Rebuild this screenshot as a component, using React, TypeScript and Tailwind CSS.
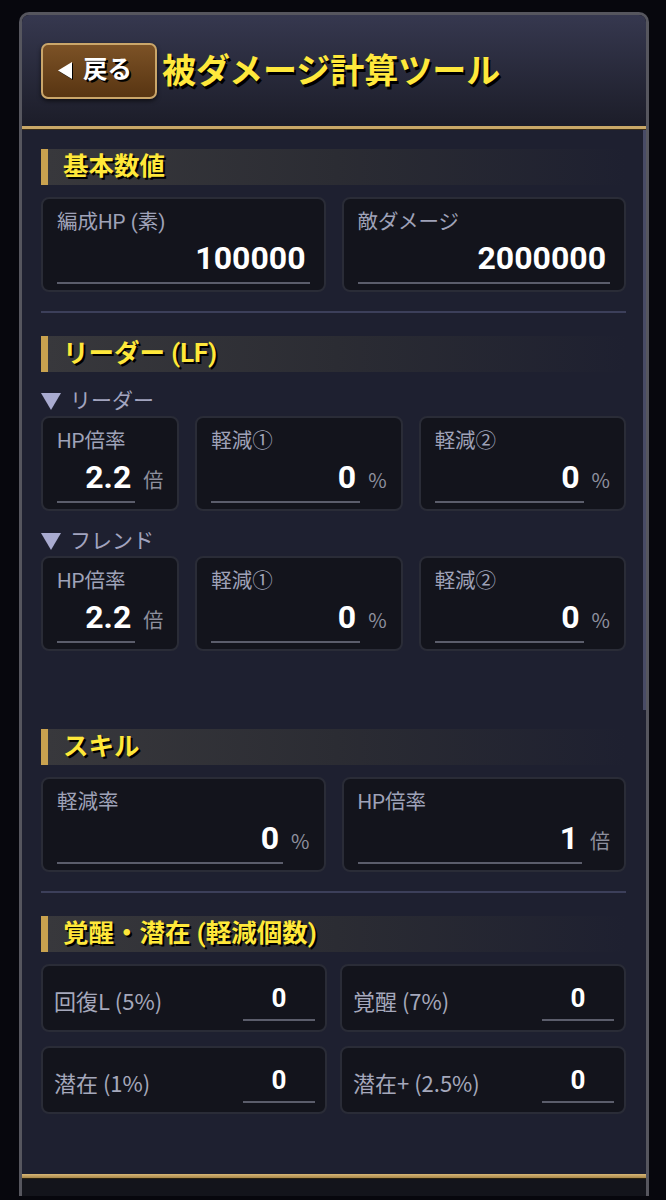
import type { ReactNode } from 'react'

// ── 小さな部品 ────────────────────────────────────────────────────────────────
function SectionTitle({ children }: { children: ReactNode }) {
  return (
    <div className="h-[36px] flex items-center border-l-[7px] border-[#c9a24f] bg-gradient-to-r from-[#38383c] via-[#2b2c33] to-transparent pl-[15px]">
      <span className="text-[25.5px] font-bold leading-none text-[#ffe83a] [text-shadow:2px_2px_0_#000]">
        {children}
      </span>
    </div>
  )
}

function SubLabel({ children }: { children: ReactNode }) {
  return (
    <div className="h-[28px] flex items-center">
      <svg width="20" height="17" viewBox="0 0 20 17" className="shrink-0">
        <polygon points="0,0 20,0 10,17" fill="#a9abd0" />
      </svg>
      <span className="ml-[9px] text-[21px] leading-none text-[#a2a4bf]">{children}</span>
    </div>
  )
}

interface FieldProps {
  label: string
  value: string
  unit?: string
}

function Field({ label, value, unit }: FieldProps) {
  return (
    <div className="h-[95px] rounded-[8px] border-2 border-[#2a2c37] bg-[#13141c] pl-[14px] pr-[14px] pt-[9px]">
      <div className="h-[28px] text-[20.5px] leading-[28px] text-[#9fa2b8] whitespace-nowrap">{label}</div>
      <div className="flex items-baseline">
        <div className="flex-1 h-[48px] flex items-end justify-end border-b-2 border-[#5b5d6b] pb-[4px] pr-[4px]">
          <span className="text-[32px] leading-[40px] font-bold text-white">{value}</span>
        </div>
        {unit && (
          <span className="ml-[8px] text-[20px] font-['Noto_Sans_CJK_JP'] text-[#8e909e]">{unit}</span>
        )}
      </div>
    </div>
  )
}

function CountField({ label, value }: { label: string; value: string }) {
  return (
    <div className="h-[68px] rounded-[8px] border-2 border-[#2a2c37] bg-[#13141c] pl-[11px] pr-[10px] flex items-center justify-between">
      <span className="pt-[4px] text-[22px] font-['Noto_Sans_CJK_JP'] text-[#a5a8bb] whitespace-nowrap">{label}</span>
      <div className="self-stretch flex flex-col justify-end pb-[9px]">
        <div className="w-[72px] border-b-2 border-[#5b5d6b] pb-[5px] text-center text-[26px] leading-[32px] font-bold text-white">
          {value}
        </div>
      </div>
    </div>
  )
}

function Divider() {
  return <div className="h-[2px] bg-[#3c3f5a]" />
}

// ── ページ ───────────────────────────────────────────────────────────────────
export default function App() {
  return (
    <div className="w-[666px] h-[1200px] bg-[#07070d] pt-[12px] font-[Roboto,'Noto_Sans_CJK_JP',sans-serif] overflow-hidden">
      <div className="ml-[19px] w-[630px] h-[1184px] rounded-t-[10px] border-[3px] border-b-0 border-[#56565e] flex flex-col overflow-hidden">
        {/* ── ヘッダー ─────────────────────────────────────────────────────── */}
        <div className="h-[111px] shrink-0 bg-gradient-to-b from-[#36384f] to-[#1c1d29] flex items-center pl-[19px]">
          <button className="w-[116px] h-[56px] rounded-[7px] border-2 border-[#caa66a] bg-gradient-to-b from-[#7c5226] to-[#583512] shadow-[0_2px_4px_rgba(0,0,0,0.6)] flex items-center pl-[15px]">
            <svg width="14" height="17" viewBox="0 0 14 17" className="shrink-0 drop-shadow-[1px_1px_0_#000]">
              <polygon points="14,0 14,17 0,8.5" fill="#fff" />
            </svg>
            <span className="ml-[11px] text-[24.5px] font-bold leading-none text-white [text-shadow:2px_2px_0_#000]">戻る</span>
          </button>
          <h1 className="ml-[5px] text-[34px] font-bold leading-none text-[#ffe83c] [text-shadow:2px_3px_0_#000] whitespace-nowrap">
            被ダメージ計算ツール
          </h1>
        </div>
        <div className="h-[4px] shrink-0 bg-[#c9a867] border-b border-[#3a2e18]" />

        {/* ── 本体 ─────────────────────────────────────────────────────────── */}
        <div className="relative h-[1044px] shrink-0 bg-[#1e2030] pl-[19px] pr-[20px] pt-[19px] overflow-hidden">
          <div className="absolute right-0 top-0 w-[3px] h-[580px] bg-[#484b66]" />

          <SectionTitle>基本数値</SectionTitle>
          <div className="mt-[12px] grid grid-cols-2 gap-[16px]">
            <Field label="編成HP (素)" value="100000" />
            <Field label="敵ダメージ" value="2000000" />
          </div>

          <div className="mt-[19px]"><Divider /></div>

          <div className="mt-[23px]"><SectionTitle>リーダー (LF)</SectionTitle></div>
          <div className="mt-[15px]"><SubLabel>リーダー</SubLabel></div>
          <div className="mt-[1px] grid grid-cols-[2fr_3fr_3fr] gap-[16px]">
            <Field label="HP倍率" value="2.2" unit="倍" />
            <Field label="軽減①" value="0" unit="%" />
            <Field label="軽減②" value="0" unit="%" />
          </div>
          <div className="mt-[16px]"><SubLabel>フレンド</SubLabel></div>
          <div className="mt-[1px] grid grid-cols-[2fr_3fr_3fr] gap-[16px]">
            <Field label="HP倍率" value="2.2" unit="倍" />
            <Field label="軽減①" value="0" unit="%" />
            <Field label="軽減②" value="0" unit="%" />
          </div>

          <div className="mt-[78px]"><SectionTitle>スキル</SectionTitle></div>
          <div className="mt-[12px] grid grid-cols-2 gap-[16px]">
            <Field label="軽減率" value="0" unit="%" />
            <Field label="HP倍率" value="1" unit="倍" />
          </div>

          <div className="mt-[19px]"><Divider /></div>

          <div className="mt-[23px]"><SectionTitle>覚醒・潜在 (軽減個数)</SectionTitle></div>
          <div className="mt-[12px] grid grid-cols-2 gap-x-[13px] gap-y-[14px]">
            <CountField label="回復L (5%)" value="0" />
            <CountField label="覚醒 (7%)" value="0" />
            <CountField label="潜在 (1%)" value="0" />
            <CountField label="潜在+ (2.5%)" value="0" />
          </div>
        </div>

        {/* ── フッター ─────────────────────────────────────────────────────── */}
        <div className="h-[5px] shrink-0 bg-gradient-to-b from-[#d8b877] to-[#a8874a] border-b border-[#2a2210]" />
        <div className="flex-1 bg-[#13141b]" />
      </div>
    </div>
  )
}
